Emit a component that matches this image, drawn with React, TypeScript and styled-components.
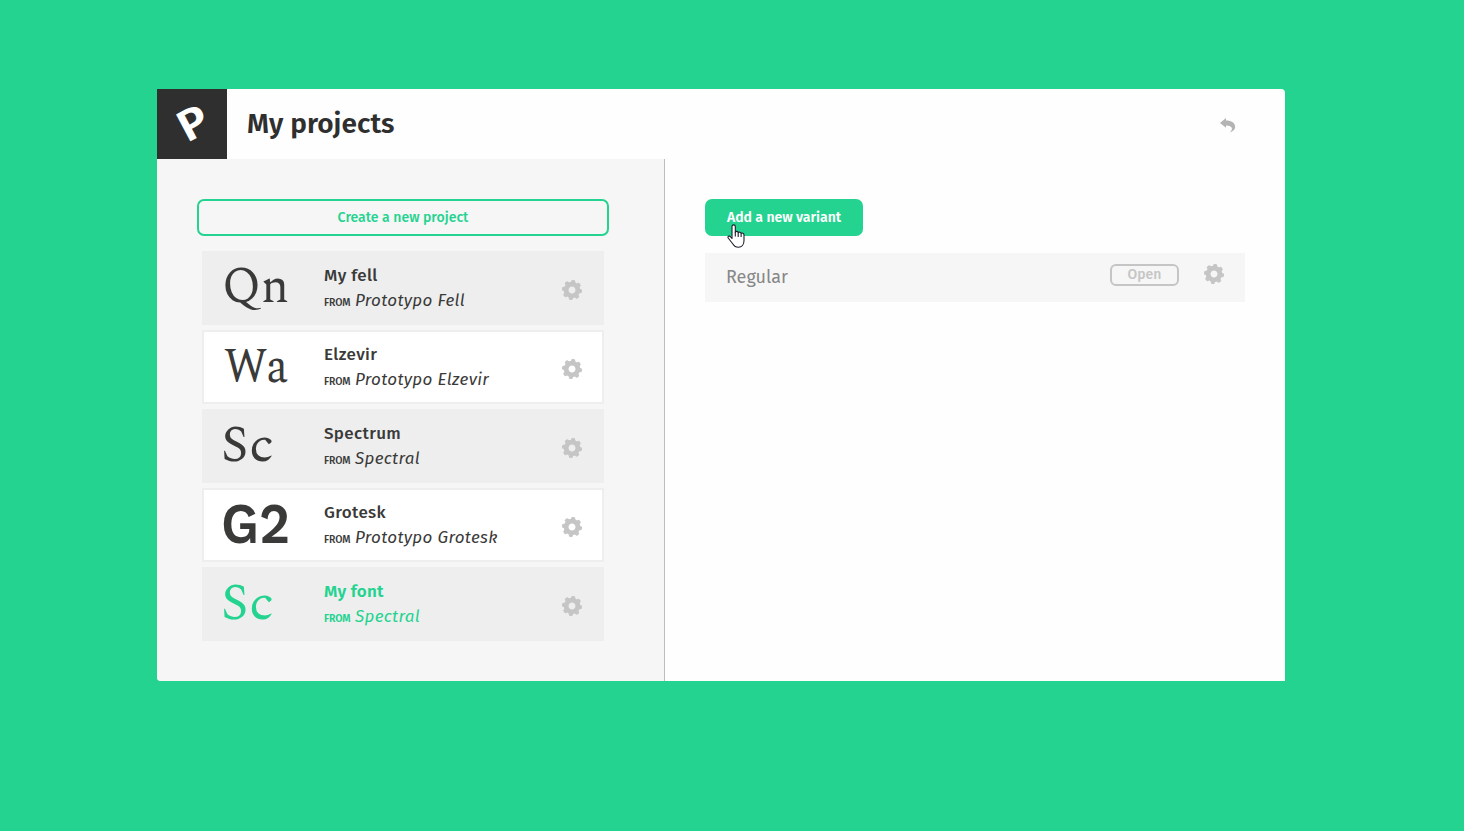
import React from "react";
import styled, { createGlobalStyle } from "styled-components";

const GREEN = "#24d390";
const DARK = "#3a3a39";
const GREY = "#c5c5c5";
const SANS = '"Fira Sans", "Noto Sans", "Open Sans", sans-serif';

const GlobalStyle = createGlobalStyle`
  *, *::before, *::after { box-sizing: border-box; }
  body { margin: 0; background: ${GREEN}; font-family: ${SANS}; }
  button { font-family: inherit; cursor: pointer; }
`;

const Page = styled.div`
  height: 831px;
  padding: 89px 179px 150px 157px;
  background: ${GREEN};
  overflow: hidden;
`;

const Library = styled.section`
  display: flex;
  flex-direction: column;
  height: 592px;
  background: #fefefe;
  border-radius: 0 4px 0 4px;
  overflow: hidden;
`;

const Header = styled.header`
  display: flex;
  align-items: center;
  height: 70px;
`;

const Logo = styled.div`
  width: 70px;
  height: 70px;
  background: #2f2f2f;
`;

const Title = styled.h1`
  flex: 1;
  margin: 0 0 0 20px;
  font-size: 28px;
  line-height: 70px;
  font-weight: 600;
  letter-spacing: 0.03px;
  color: #2f2f2f;
`;

const BackButton = styled.button`
  display: flex;
  margin-right: 49px;
  padding: 2px 0 0;
  border: 0;
  background: none;
`;

const Body = styled.div`
  display: flex;
  flex: 1;
`;

const ProjectsPane = styled.div`
  width: 508px;
  padding: 40px 55px 0 40px;
  background: #f6f6f6;
  border-right: 1px solid #bdbdbd;
`;

const VariantsPane = styled.div`
  flex: 1;
  padding: 40px 40px 0;
`;

const CreateButton = styled.button`
  display: block;
  width: 412px;
  height: 37px;
  padding: 0 0 1px;
  border: 2px solid ${GREEN};
  border-radius: 7px;
  background: transparent;
  color: ${GREEN};
  font-size: 14px;
  font-weight: 500;
  letter-spacing: 0.03px;
`;

const AddButton = styled.button`
  position: relative;
  display: block;
  width: 158px;
  height: 37px;
  padding: 0 0 1px;
  border: 0;
  border-radius: 7px;
  background: ${GREEN};
  color: #fff;
  font-size: 14px;
  font-weight: 600;
`;

const Pointer = styled.svg`
  position: absolute;
  left: 22px;
  top: 25px;
`;

const ProjectList = styled.div`
  display: flex;
  flex-direction: column;
  gap: 5px;
  width: 402px;
  margin: 15px 0 0 5px;
`;

const Project = styled.article<{ $light?: boolean; $active?: boolean }>`
  display: flex;
  align-items: center;
  height: 74px;
  padding-right: 20px;
  border: 2px solid #eee;
  background: ${(p) => (p.$light ? "#fff" : "#eee")};
  color: ${(p) => (p.$active ? GREEN : DARK)};
`;

const Specimen = styled.svg`
  width: 120px;
  height: 70px;
  overflow: visible;
  fill: currentColor;
`;

const Details = styled.div`
  flex: 1;
  padding-top: 2px;
  white-space: nowrap;
`;

const Name = styled.div<{ $active?: boolean }>`
  font-size: 17px;
  line-height: 25px;
  font-weight: ${(p) => (p.$active ? 600 : 500)};
  letter-spacing: ${(p) => (p.$active ? 0.2 : 0.34)}px;
`;

const Origin = styled.div`
  display: flex;
  align-items: baseline;
  line-height: 25px;
`;

const From = styled.span<{ $active?: boolean }>`
  width: 31px;
  font-size: 10.5px;
  font-weight: ${(p) => (p.$active ? 600 : 500)};
  letter-spacing: -0.1px;
`;

const Template = styled.span`
  font-size: 17px;
  font-style: italic;
  font-weight: 400;
  letter-spacing: 0.34px;
`;

const Variant = styled.div`
  display: flex;
  align-items: center;
  height: 49px;
  margin-top: 17px;
  padding: 0 21px;
  background: #f6f6f6;
`;

const VariantName = styled.span`
  flex: 1;
  font-size: 18px;
  line-height: 25px;
  color: #878787;
`;

const OpenButton = styled.button`
  width: 69px;
  height: 22px;
  margin: 0 25px 6px 0;
  padding: 0;
  border: 2px solid ${GREY};
  border-radius: 6px;
  background: transparent;
  color: ${GREY};
  font-size: 14px;
  line-height: 16px;
  font-weight: 500;
`;

const GearSlot = styled.span<{ $lift?: boolean }>`
  display: flex;
  margin: ${(p) => (p.$lift ? "0 0 7px" : "4px 0 0")};
`;

const teeth = [0, 45, 90, 135, 180, 225, 270, 315];

function Gear({ lift }: { lift?: boolean }) {
  return (
    <GearSlot $lift={lift}>
      <svg width="20" height="20" viewBox="-10 -10 20 20">
        <circle r="5.9" fill="none" stroke={GREY} strokeWidth="4.8" />
        {teeth.map((a) => (
          <path
            key={a}
            d="M-2.3-7.6L-1.7-9.7Q-1.6-10-1.2-10H1.2Q1.6-10 1.7-9.7L2.3-7.6Z"
            fill={GREY}
            transform={`rotate(${a + 8})`}
          />
        ))}
      </svg>
    </GearSlot>
  );
}

type Item = {
  sample: string;
  family: string;
  weight: number;
  size: number;
  x: number;
  y: number;
  width: number;
  name: string;
  origin: string;
  active?: boolean;
};

const spectral = '"Spectral", "Liberation Serif", serif';
const grotesk = '"Work Sans", "Liberation Sans", sans-serif';

const projects: Item[] = [
  { sample: "Qn", family: spectral, weight: 400, size: 52, x: 18, y: 49, width: 67, name: "My fell", origin: "Prototypo Fell" },
  { sample: "Wa", family: spectral, weight: 400, size: 50, x: 20, y: 50, width: 64, name: "Elzevir", origin: "Prototypo Elzevir" },
  { sample: "Sc", family: spectral, weight: 400, size: 52.5, x: 17, y: 50, width: 53, name: "Spectrum", origin: "Spectral" },
  { sample: "G2", family: grotesk, weight: 600, size: 56, x: 17, y: 53, width: 69, name: "Grotesk", origin: "Prototypo Grotesk" },
  { sample: "Sc", family: spectral, weight: 400, size: 52.5, x: 17, y: 50, width: 53, name: "My font", origin: "Spectral", active: true },
];

export default function App() {
  return (
    <Page>
      <GlobalStyle />
      <Library>
        <Header>
          <Logo>
            <svg width="70" height="70" viewBox="0 0 70 70">
              <text
                transform="translate(36 52) rotate(-28) scale(1.1 1)"
                fontFamily={SANS}
                fontSize="44"
                fontWeight="600"
                fill="#fff"
                x="-5.5"
                y="-1"
              >
                P
              </text>
            </svg>
          </Logo>
          <Title>My projects</Title>
          <BackButton aria-label="Back">
            <svg width="16" height="15" viewBox="0 0 16 15">
              <path
                d="M0 5L6 0V2.6C11.5 2.6 15.2 5 15.2 9C15.2 11.6 13 13.6 9.8 14.4C11.8 12.6 12.4 11 11.6 9.6C10.6 8 8.8 7.3 6 7.4V9.8Z"
                fill="#b4b4b4"
              />
            </svg>
          </BackButton>
        </Header>
        <Body>
          <ProjectsPane>
            <CreateButton>Create a new project</CreateButton>
            <ProjectList>
              {projects.map((p, i) => (
                <Project key={p.name} $light={i % 2 === 1} $active={p.active}>
                  <Specimen viewBox="0 0 120 70">
                    <text
                      x={p.x}
                      y={p.y}
                      fontFamily={p.family}
                      fontWeight={p.weight}
                      fontSize={p.size}
                      textLength={p.width}
                      lengthAdjust="spacingAndGlyphs"
                    >
                      {p.sample}
                    </text>
                  </Specimen>
                  <Details>
                    <Name $active={p.active}>{p.name}</Name>
                    <Origin>
                      <From $active={p.active}>FROM</From>
                      <Template>{p.origin}</Template>
                    </Origin>
                  </Details>
                  <Gear />
                </Project>
              ))}
            </ProjectList>
          </ProjectsPane>
          <VariantsPane>
            <AddButton>
              Add a new variant
              <Pointer width="19" height="25" viewBox="0 0 19 25">
                <path
                  d="M5 14.5V2.6C5 .3 8.3.3 8.3 2.6V8.2C8.8 6.9 11 7.2 11.2 8.7C11.8 7.7 13.9 8 14.1 9.5C14.9 8.7 17 9 17 11V16.5C17 20.5 14.8 23.3 11.5 23.3C8.8 23.3 7 22 5.9 20L1.2 14C.4 12.4 2.2 11.5 3.4 12.6Z"
                  fill="#fff"
                  stroke="#1d1d2b"
                  strokeWidth="1.1"
                  strokeLinejoin="round"
                />
                <path d="M8.3 8V12.5M11.2 8.7V13M14.1 9.5V13" stroke="#1d1d2b" strokeWidth="1.1" fill="none" />
              </Pointer>
            </AddButton>
            <Variant>
              <VariantName>Regular</VariantName>
              <OpenButton>Open</OpenButton>
              <Gear lift />
            </Variant>
          </VariantsPane>
        </Body>
      </Library>
    </Page>
  );
}
